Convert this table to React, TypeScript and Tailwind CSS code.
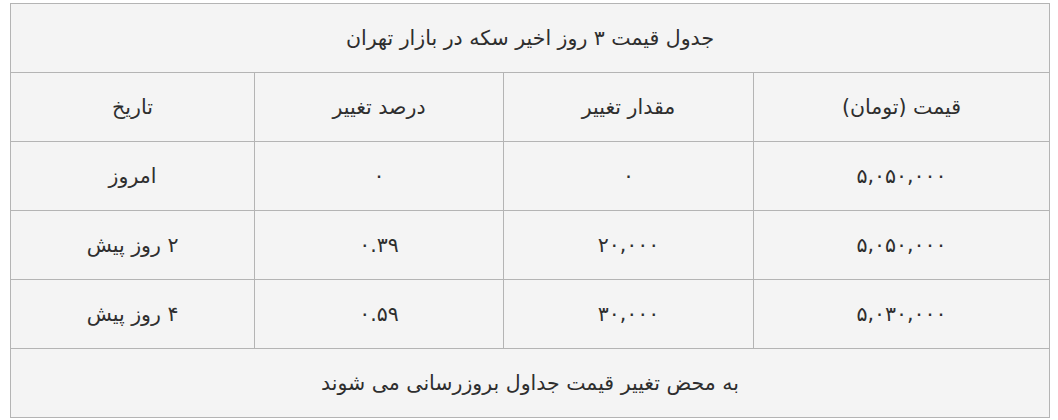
const rows = [
  { price: "۵,۰۵۰,۰۰۰", change: "۰", percent: "۰", date: "امروز" },
  { price: "۵,۰۵۰,۰۰۰", change: "۲۰,۰۰۰", percent: "۰.۳۹", date: "۲ روز پیش" },
  { price: "۵,۰۳۰,۰۰۰", change: "۳۰,۰۰۰", percent: "۰.۵۹", date: "۴ روز پیش" },
];

const cell = "border border-[#b4b4b4] h-[69px] text-center align-middle p-0";

export default function App() {
  return (
    <div className="bg-white w-[1058px] h-[420px] pt-[3px] pl-[10px]">
      <table
        dir="rtl"
        className="w-[1039px] border-collapse bg-[#f4f4f4] text-[20.5px] text-[#2e2e2e] table-fixed"
        style={{ fontFamily: '"DejaVu Sans", "Noto Sans", sans-serif' }}
      >
        <colgroup>
          <col className="w-[296px]" />
          <col className="w-[250px]" />
          <col className="w-[249px]" />
          <col className="w-[244px]" />
        </colgroup>
        <tbody>
          <tr>
            <td colSpan={4} className={cell}>
              جدول قیمت ۳ روز اخیر سکه در بازار تهران
            </td>
          </tr>
          <tr>
            <td className={cell}>قیمت (تومان)</td>
            <td className={cell}>مقدار تغییر</td>
            <td className={cell}>درصد تغییر</td>
            <td className={cell}>تاریخ</td>
          </tr>
          {rows.map((r, i) => (
            <tr key={i}>
              <td className={cell}>{r.price}</td>
              <td className={cell}>{r.change}</td>
              <td className={cell}>{r.percent}</td>
              <td className={cell}>{r.date}</td>
            </tr>
          ))}
          <tr>
            <td colSpan={4} className={cell}>
              به محض تغییر قیمت جداول بروزرسانی می شوند
            </td>
          </tr>
        </tbody>
      </table>
    </div>
  );
}
